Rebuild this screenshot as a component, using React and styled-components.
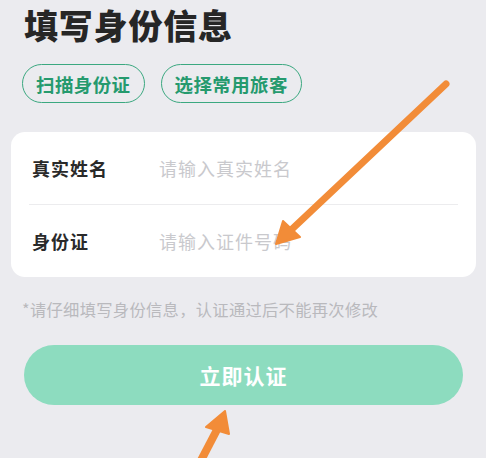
import React from 'react'
import styled, {createGlobalStyle} from 'styled-components'

const GlobalStyle = createGlobalStyle`
  html, body {
    margin: 0;
    padding: 0;
    background: #ebebef;
  }
  body {
    font-family: "Noto Sans CJK SC", "Noto Sans", sans-serif;
  }
`

const Page = styled.div`
  position: relative;
  width: 486px;
  height: 458px;
  overflow: hidden;
  padding: 0 10px;
  box-sizing: border-box;
`

const Title = styled.h1`
  margin: 4px 0 0 14px;
  font-size: 34px;
  line-height: 41px;
  font-weight: 900;
  color: #262626;
  letter-spacing: 0.8px;
`

const Pills = styled.div`
  display: flex;
  gap: 16px;
  margin: 19px 0 0 12px;
`

const Pill = styled.div`
  height: 39px;
  box-sizing: border-box;
  padding: 0 13px;
  border: 1.5px solid #3ba880;
  border-radius: 20px;
  display: flex;
  align-items: center;
  color: #259a6e;
  font-size: 18.5px;
  font-weight: 700;
  letter-spacing: 0.4px;
`

const Card = styled.div`
  margin: 29px 0 0 1px;
  width: 465px;
  background: #fff;
  border-radius: 14px;
  padding: 0 18px;
  box-sizing: border-box;
`

const Row = styled.div`
  display: flex;
  align-items: center;
  height: 72px;
  border-top: ${p => (p.first ? 'none' : '1px solid #ececee')};
`

const Label = styled.div`
  width: 127px;
  padding-left: 3px;
  font-size: 18px;
  font-weight: 700;
  color: #2a2a2a;
  letter-spacing: 1px;
`

const Placeholder = styled.div`
  font-size: 18px;
  color: #c9c9cd;
  letter-spacing: 1px;
`

const Note = styled.p`
  margin: 20px 0 0 12px;
  font-size: 16.3px;
  color: #b9b9bd;
  letter-spacing: 0.3px;
`

const Submit = styled.button`
  display: flex;
  align-items: center;
  justify-content: center;
  margin: 24px 0 0 14px;
  width: 439px;
  height: 60px;
  border: none;
  border-radius: 30px;
  background: #8ddcbf;
  color: #fff;
  font-family: inherit;
  font-size: 21px;
  font-weight: 700;
  letter-spacing: 1px;
`

const Arrows = styled.svg`
  position: absolute;
  left: 0;
  top: 0;
  pointer-events: none;
`

function App() {
  return (
    <Page>
      <GlobalStyle />
      <Title>填写身份信息</Title>
      <Pills>
        <Pill>扫描身份证</Pill>
        <Pill>选择常用旅客</Pill>
      </Pills>
      <Card>
        <Row first>
          <Label>真实姓名</Label>
          <Placeholder>请输入真实姓名</Placeholder>
        </Row>
        <Row>
          <Label>身份证</Label>
          <Placeholder>请输入证件号码</Placeholder>
        </Row>
      </Card>
      <Note>*请仔细填写身份信息，认证通过后不能再次修改</Note>
      <Submit>立即认证</Submit>
      <Arrows width="486" height="458" viewBox="0 0 486 458">
        <g fill="#f28c38" stroke="#f28c38" strokeLinejoin="round">
          <line x1="446" y1="84" x2="290" y2="231" strokeWidth="7" strokeLinecap="round" />
          <polygon points="276,244 283,221 300,237" strokeWidth="2" />
          <line x1="196" y1="470" x2="220" y2="424" strokeWidth="8" />
          <polygon points="225,411 206,427 229,434" strokeWidth="2" />
        </g>
      </Arrows>
    </Page>
  )
}

export default App
